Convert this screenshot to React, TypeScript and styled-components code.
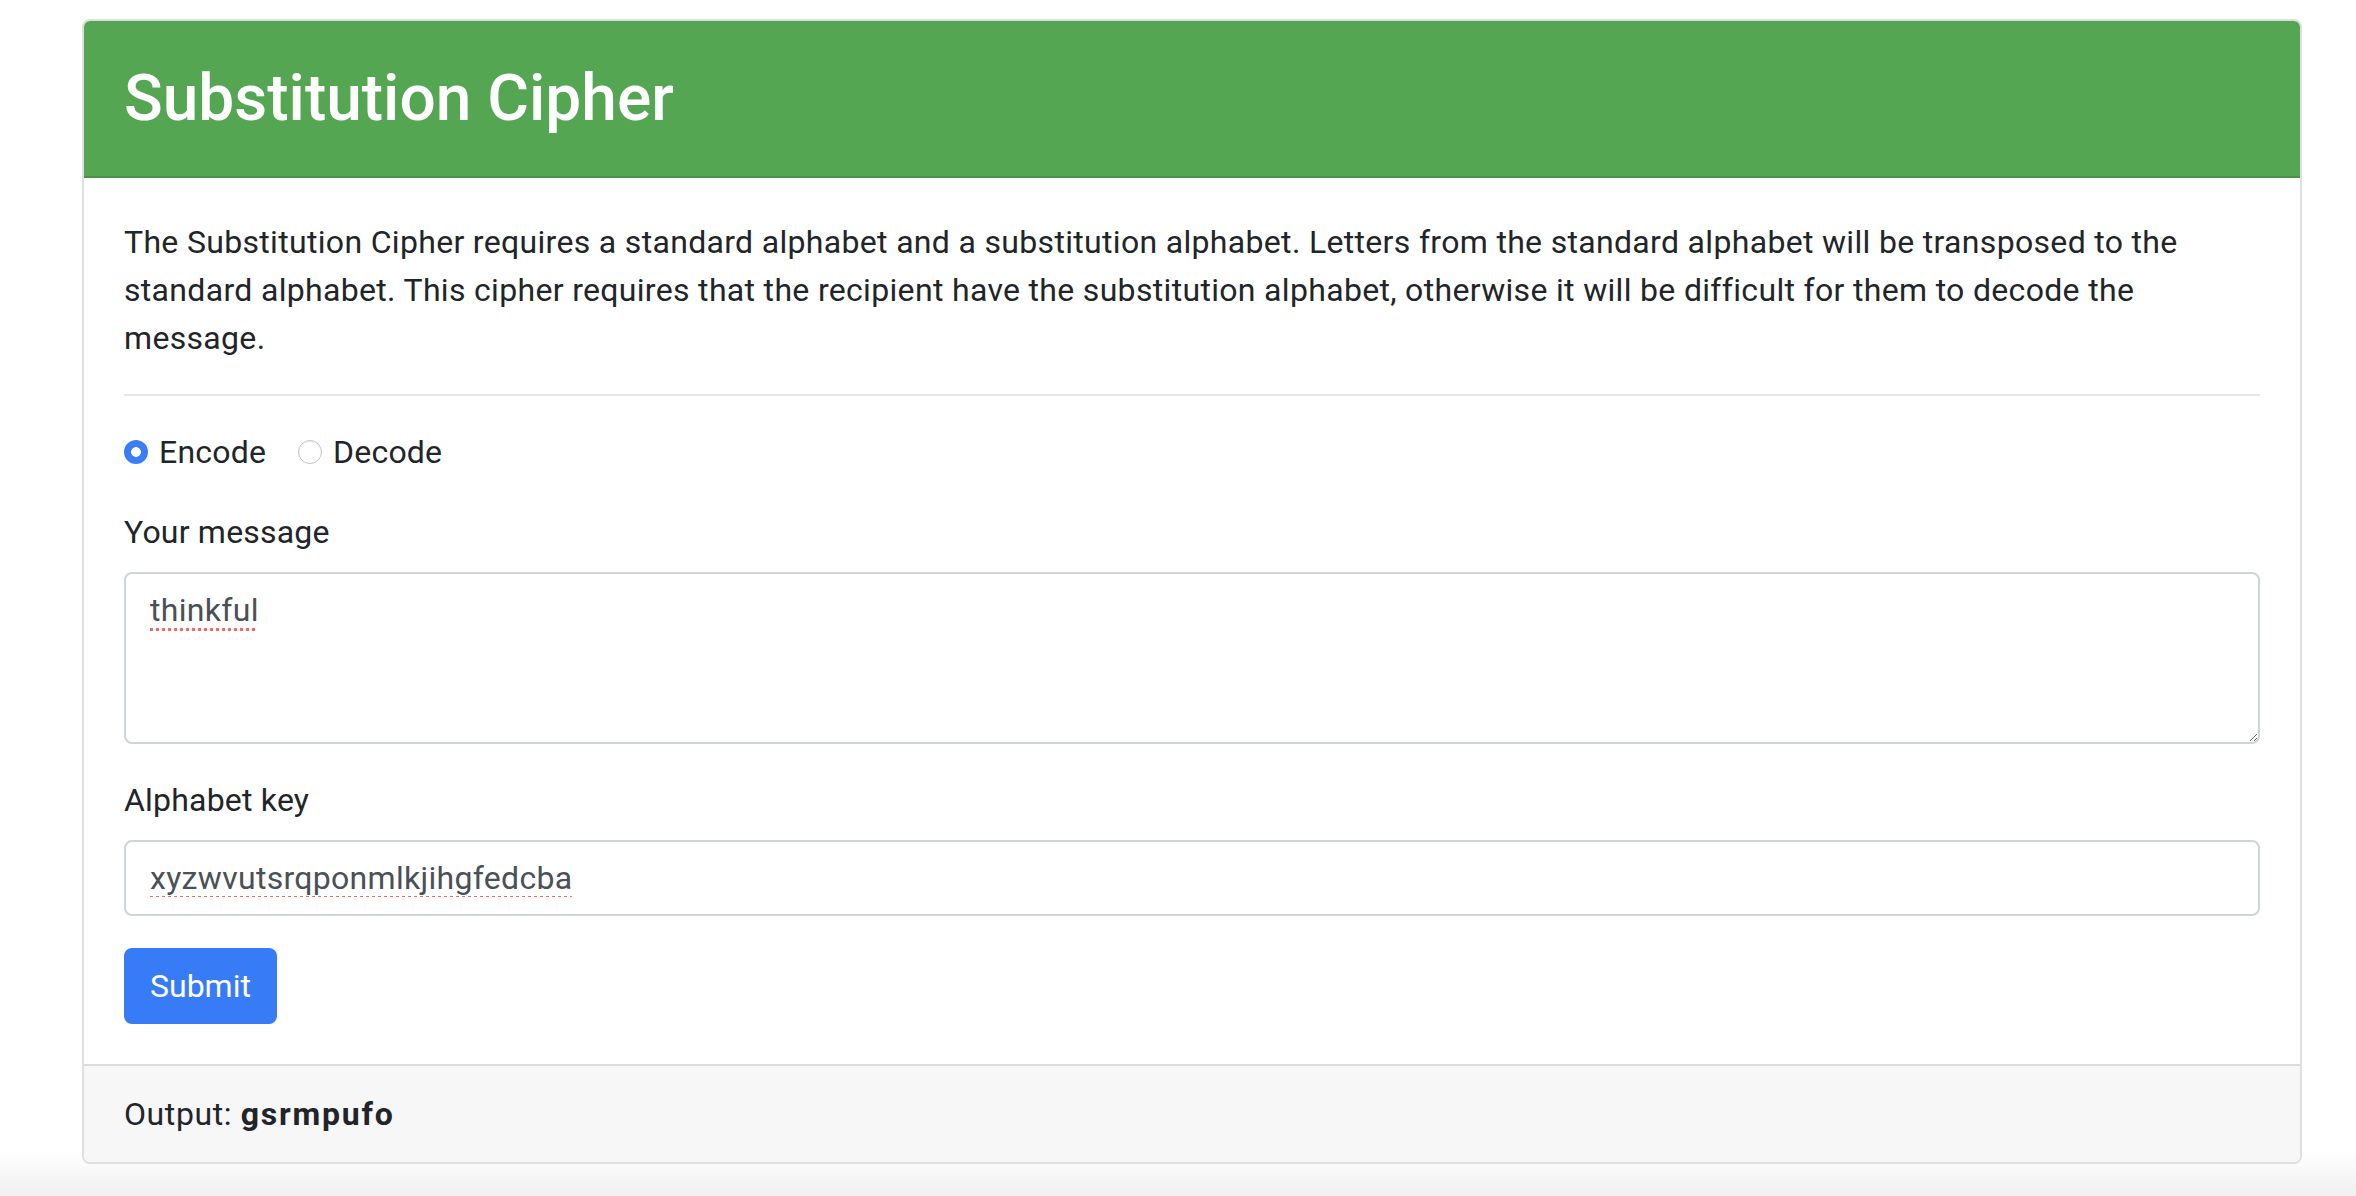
import React, { useState } from "react";
import styled, { createGlobalStyle } from "styled-components";

const GlobalStyle = createGlobalStyle`
  html, body {
    margin: 0;
    padding: 0;
    min-height: 100%;
  }
  body {
    font-family: Roboto, "Liberation Sans", Arial, sans-serif;
    color: #212529;
    background: linear-gradient(to bottom, #ffffff 0, #ffffff 1150px, #efefef 1196px);
    min-height: 1196px;
  }
  * { box-sizing: border-box; }
`;

const Page = styled.main`
  padding: 19px 54px 0 82px;
`;

const Card = styled.section`
  display: flex;
  flex-direction: column;
  background: #fff;
  border: 2px solid #dfdfdf;
  border-radius: 8px;
  overflow: hidden;
`;

const CardHeader = styled.header`
  background: #54a653;
  border-bottom: 2px solid #4a9249;
  padding: 40px 40px 38px;
`;

const Title = styled.h2`
  margin: 0;
  color: #fff;
  font-size: 64px;
  font-weight: 500;
  line-height: 1.2;
`;

const CardBody = styled.div`
  padding: 40px;
  display: flex;
  flex-direction: column;
`;

const Intro = styled.p`
  margin: 0 0 32px;
  font-size: 32px;
  line-height: 48px;
  letter-spacing: 0.32px;
`;

const Rule = styled.hr`
  margin: 0 0 32px;
  border: 0;
  border-top: 2px solid #e6e6e6;
`;

const Form = styled.form`
  display: flex;
  flex-direction: column;
  align-items: flex-start;
`;

const RadioRow = styled.div`
  display: flex;
  align-items: center;
  gap: 32px;
  margin-bottom: 32px;
  height: 48px;
`;

const RadioLabel = styled.label`
  display: flex;
  align-items: center;
  gap: 11px;
  font-size: 32px;
  line-height: 48px;
  letter-spacing: 0.2px;
  cursor: pointer;
`;

const Radio = styled.input`
  appearance: none;
  margin: 0;
  width: 24px;
  height: 24px;
  border-radius: 50%;
  background: #fff;
  border: 1px solid #c4c4c4;
  box-shadow: inset 0 1px 2px rgba(0, 0, 0, 0.08);
  &:checked {
    border: 0;
    box-shadow: none;
    background: radial-gradient(circle, #ffffff 0 4.5px, #3a7df6 5.2px);
  }
`;

const Group = styled.div`
  display: flex;
  flex-direction: column;
  align-self: stretch;
  margin-bottom: 32px;
`;

const FieldLabel = styled.label`
  font-size: 32px;
  line-height: 48px;
  letter-spacing: 0.2px;
  margin-bottom: 16px;
`;

const fieldBase = `
  font-family: Roboto, "Liberation Sans", Arial, sans-serif;
  font-size: 32px;
  line-height: 48px;
  letter-spacing: 0.3px;
  color: #495057;
  background: #fff;
  border: 2px solid #ced4da;
  border-radius: 8px;
  padding: 12px 24px;
  width: 100%;
  outline: none;
  text-decoration: underline dotted #f26b5e;
  text-decoration-thickness: 3px;
  text-underline-offset: 7px;
`;

const TextArea = styled.textarea`
  ${fieldBase}
  height: 172px;
  resize: vertical;
  display: block;
`;

const TextInput = styled.input`
  ${fieldBase}
  height: 76px;
  display: block;
`;

const SubmitButton = styled.button`
  font-family: Roboto, "Liberation Sans", Arial, sans-serif;
  font-size: 32px;
  line-height: 48px;
  color: #fff;
  background: #387bf6;
  border: 2px solid #387bf6;
  border-radius: 8px;
  padding: 12px 24px;
  cursor: pointer;
`;

const CardFooter = styled.footer`
  background: #f7f7f7;
  border-top: 2px solid #dcdcdc;
  padding: 24px 40px;
  font-size: 32px;
  line-height: 48px;
  letter-spacing: 0.6px;
`;

const Strong = styled.strong`
  font-weight: 700;
  letter-spacing: 1.8px;
`;

export default function App() {
  const [mode, setMode] = useState("encode");
  return (
    <>
      <GlobalStyle />
      <Page>
        <Card>
          <CardHeader>
            <Title>Substitution Cipher</Title>
          </CardHeader>
          <CardBody>
            <Intro>
              The Substitution Cipher requires a standard alphabet and a substitution alphabet. Letters from the
              standard alphabet will be transposed to the standard alphabet. This cipher requires that the recipient
              have the substitution alphabet, otherwise it will be difficult for them to decode the message.
            </Intro>
            <Rule />
            <Form onSubmit={(e) => e.preventDefault()}>
              <RadioRow>
                <RadioLabel>
                  <Radio
                    type="radio"
                    name="mode"
                    checked={mode === "encode"}
                    onChange={() => setMode("encode")}
                  />
                  Encode
                </RadioLabel>
                <RadioLabel>
                  <Radio
                    type="radio"
                    name="mode"
                    checked={mode === "decode"}
                    onChange={() => setMode("decode")}
                  />
                  Decode
                </RadioLabel>
              </RadioRow>
              <Group>
                <FieldLabel htmlFor="message">Your message</FieldLabel>
                <TextArea id="message" rows={3} defaultValue="thinkful" />
              </Group>
              <Group>
                <FieldLabel htmlFor="alphabet">Alphabet key</FieldLabel>
                <TextInput id="alphabet" type="text" defaultValue="xyzwvutsrqponmlkjihgfedcba" />
              </Group>
              <SubmitButton type="submit">Submit</SubmitButton>
            </Form>
          </CardBody>
          <CardFooter>
            Output: <Strong>gsrmpufo</Strong>
          </CardFooter>
        </Card>
      </Page>
    </>
  );
}
